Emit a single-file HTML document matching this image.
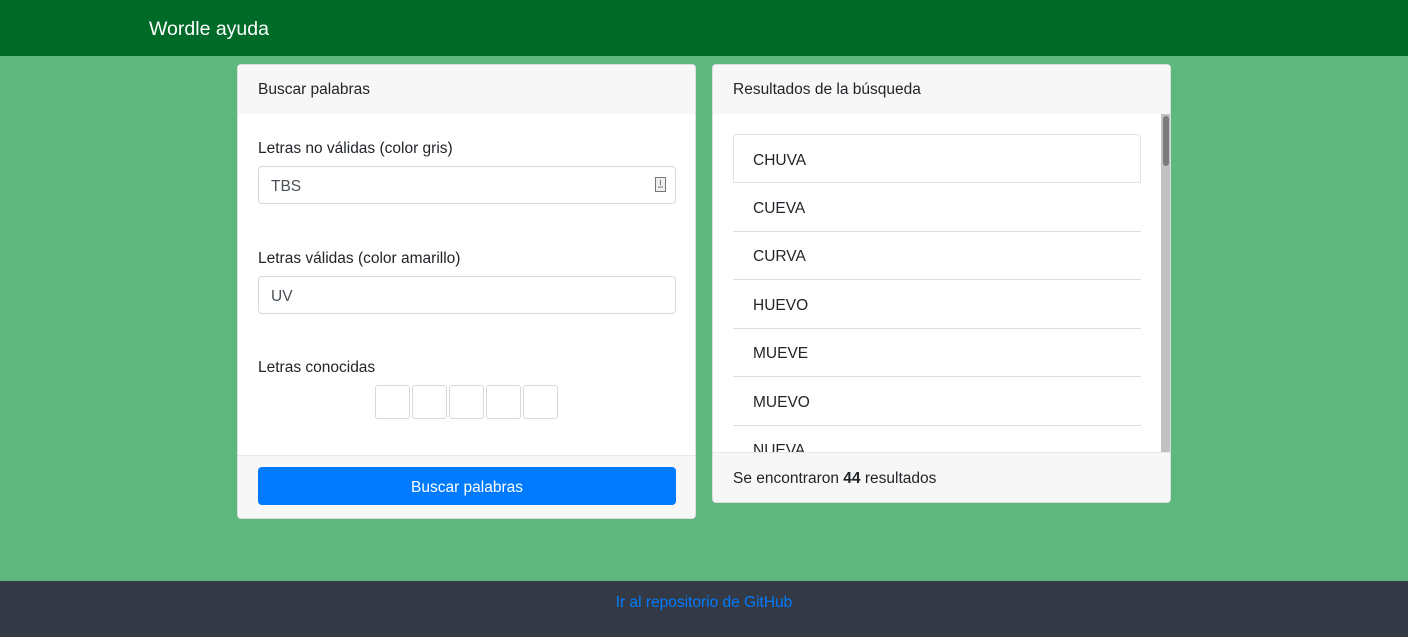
<!DOCTYPE html>
<html><head><meta charset="utf-8"><style>
*{box-sizing:border-box;margin:0;padding:0}
body{width:1408px;height:637px;background:#5eb77d;font-family:"Liberation Sans",sans-serif;font-size:15.5px;color:#212529;position:relative;overflow:hidden}
.nav{position:absolute;left:0;top:0;width:1408px;height:56px;background:#006b28;color:#fff;font-size:19.5px}
.nav span{position:absolute;left:149px;top:18px}
.card{position:absolute;background:#fff;border:1px solid #ddd;border-radius:4px;overflow:hidden}
.hd{height:49px;background:#f7f7f7;padding:16px 20px 0;}
.ab{position:absolute}
.inp{position:absolute;left:20px;width:418px;height:38px;border:1px solid #d6dadf;border-radius:4px;padding:11px 12px 0;color:#495057}
.box{position:absolute;top:320px;width:35px;height:34px;border:1px solid #d6dadf;border-radius:3px}
.ft{position:absolute;left:0;bottom:0;width:100%;background:#f7f7f7;border-top:1px solid #e8e8e8}
.li{position:absolute;left:20px;width:408px;height:49px;border-bottom:1px solid #ddd;padding:17px 20px 0}
.foot{position:absolute;left:0;top:581px;width:1408px;height:56px;background:#343a45;color:#007bff;text-align:center;padding-top:13px}
</style></head><body>
<div class="nav"><span>Wordle ayuda</span></div>
<div class="card" style="left:237px;top:64px;width:459px;height:455px">
<div class="hd">Buscar palabras</div>
<div class="ab" style="left:20px;top:75px">Letras no válidas (color gris)</div>
<div class="inp" style="top:101px">TBS<svg style="position:absolute;right:9px;top:10px" width="11" height="15"><rect x="0.5" y="0.5" width="10" height="14" fill="#eee" stroke="#777"/><path d="M5.5 3v5M3 10h5" stroke="#777"/></svg></div>
<div class="ab" style="left:20px;top:185px">Letras válidas (color amarillo)</div>
<div class="inp" style="top:211px">UV</div>
<div class="ab" style="left:20px;top:294px">Letras conocidas</div>
<div class="box" style="left:137px"></div><div class="box" style="left:174px"></div><div class="box" style="left:211px"></div><div class="box" style="left:248px"></div><div class="box" style="left:285px"></div>
<div class="ft" style="height:63px"><div style="position:absolute;left:20px;top:11px;width:418px;height:38px;background:#007bff;border-radius:4px;color:#fff;text-align:center;padding-top:12px">Buscar palabras</div></div>
</div>
<div class="card" style="left:712px;top:64px;width:459px;height:439px">
<div class="hd">Resultados de la búsqueda</div>
<div class="li" style="top:69px;border:1px solid #e3e3e3;border-radius:4px 4px 0 0;padding-left:19px">CHUVA</div>
<div class="li" style="top:118px">CUEVA</div>
<div class="li" style="top:166px">CURVA</div>
<div class="li" style="top:215px">HUEVO</div>
<div class="li" style="top:263px">MUEVE</div>
<div class="li" style="top:312px">MUEVO</div>
<div class="li" style="top:360px">NUEVA</div>
<div class="ab" style="left:448px;top:49px;width:10px;height:340px;background:#c1c1c1"><div style="margin:2px 2px;width:6px;height:50px;background:#7b7b7b;border-radius:3px"></div></div>
<div class="ft" style="height:50px;padding:17px 20px 0">Se encontraron <b>44</b> resultados</div>
</div>
<div class="foot">Ir al repositorio de GitHub</div>
</body></html>
